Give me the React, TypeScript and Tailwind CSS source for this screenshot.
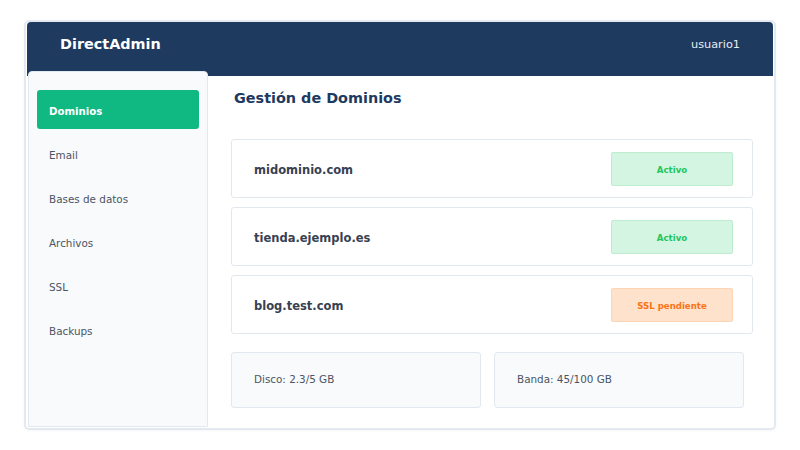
export default function App() {
  const menu = ['Email', 'Bases de datos', 'Archivos', 'SSL', 'Backups'];
  const domains = [
    { name: 'midominio.com', status: 'Activo', ok: true },
    { name: 'tienda.ejemplo.es', status: 'Activo', ok: true },
    { name: 'blog.test.com', status: 'SSL pendiente', ok: false },
  ];

  return (
    <div className="w-[800px] h-[450px] bg-white pt-[20px] pl-[24px] font-['DejaVu_Sans',sans-serif]">
      <div className="w-[752px] h-[410px] border-2 border-[#e4e9f0] rounded-[5px] px-px pb-px flex flex-col shadow-[0_1px_3px_rgba(0,0,0,0.04)]">
        {/* header */}
        <div className="h-[54px] shrink-0 bg-[#1e3a5f] rounded-t-[4px] flex items-center justify-between px-[33px] pb-[9px]">
          <span className="text-white font-bold text-[14.4px]">DirectAdmin</span>
          <span className="text-[#e8edf3] text-[11.3px] mt-[2px]">usuario1</span>
        </div>

        <div className="flex flex-1">
          {/* sidebar */}
          <div className="relative z-10 -mt-[5px] ml-px w-[180px] shrink-0 bg-[#f8fafc] border border-[#e2e8f0] rounded-t-[4px] pt-[18px] px-[8px] flex flex-col gap-[5px]">
            <div className="h-[39px] mb-[2px] bg-[#10b981] rounded-[3px] flex items-center pl-[12px] pt-[4px] text-white font-bold text-[10.2px]">
              Dominios
            </div>
            {menu.map((m) => (
              <div key={m} className="h-[39px] flex items-center pl-[12px] pt-px text-[#4b5563] text-[10.4px]">
                {m}
              </div>
            ))}
          </div>

          {/* main */}
          <div className="flex-1 pt-[12px] pl-[23px] pr-[20px]">
            <h1 className="text-[#1e3a5f] font-bold text-[14.4px] leading-[20px] pl-[3px] mb-[31px]">
              Gestión de Dominios
            </h1>
            <div className="flex flex-col gap-[9px]">
              {domains.map((d) => (
                <div
                  key={d.name}
                  className="h-[59px] border border-[#e2e8f0] rounded-[3px] flex items-center justify-between pl-[22px] pr-[19px]"
                >
                  <span className="text-[#374151] font-bold text-[11.5px] pt-[5px]">{d.name}</span>
                  <span
                    className={
                      d.ok
                        ? 'w-[122px] h-[34px] rounded-[2px] bg-[#d3f5e1] border border-[#bdeccf] flex items-center justify-center pt-[3px] text-[#22c55e] font-bold text-[8.6px]'
                        : 'w-[122px] h-[34px] rounded-[2px] bg-[#fee2cc] border border-[#fdd4b4] flex items-center justify-center pt-[3px] text-[#f97316] font-bold text-[8.6px]'
                    }
                  >
                    {d.status}
                  </span>
                </div>
              ))}
            </div>
            <div className="flex gap-[13px] mt-[18px]">
              <div className="w-[250px] h-[56px] bg-[#f8fafc] border border-[#e2e8f0] rounded-[3px] flex items-center pl-[22px] text-[#4b5563] text-[10.4px]">
                Disco: 2.3/5 GB
              </div>
              <div className="w-[250px] h-[56px] bg-[#f8fafc] border border-[#e2e8f0] rounded-[3px] flex items-center pl-[22px] text-[#4b5563] text-[10.4px]">
                Banda: 45/100 GB
              </div>
            </div>
          </div>
        </div>
      </div>
    </div>
  );
}
